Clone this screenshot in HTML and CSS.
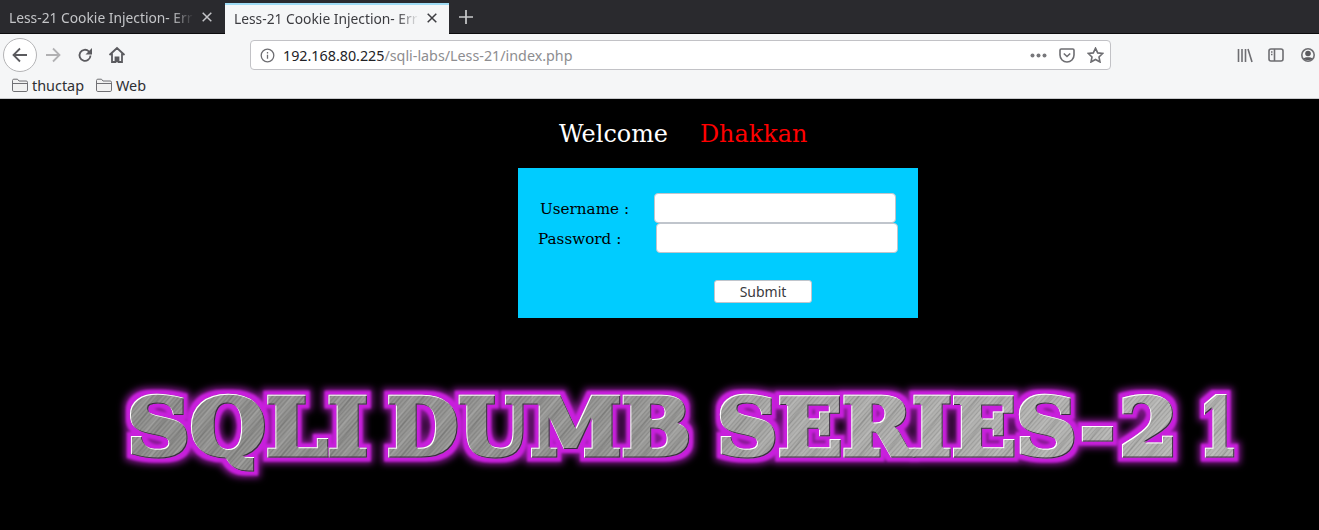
FILE: index.html
```html
<!DOCTYPE html>
<html lang="en">
<head>
<meta charset="utf-8">
<title>Less-21 Cookie Injection- Error Based</title>
<link rel="stylesheet" href="styles.css">
</head>
<body>
<header class="browser">
  <div class="tabbar">
    <div class="tab">
      <span class="tab-title">Less-21 Cookie Injection- Err</span>
      <svg class="tab-close" width="10" height="10" viewBox="0 0 10 10"><path d="M.7.7l8.600 8.600M9.300.7L.7 9.300"/></svg>
    </div>
    <div class="tab tab-active">
      <span class="tab-title">Less-21 Cookie Injection- Err</span>
      <svg class="tab-close" width="10" height="10" viewBox="0 0 10 10"><path d="M.7.7l8.600 8.600M9.300.7L.7 9.300"/></svg>
    </div>
    <svg class="new-tab" width="14" height="14" viewBox="0 0 14 14"><path d="M7 0v14M0 7h14"/></svg>
  </div>
  <div class="navbar">
    <div class="back">
      <svg width="18" height="18" viewBox="0 0 18 18" class="ico"><path d="M16 9H2.500M9 2.500L2.500 9 9 15.500"/></svg>
    </div>
    <svg width="18" height="18" viewBox="0 0 18 18" class="ico ico-off forward"><path d="M2 9h13.500M9 2.500L15.500 9 9 15.500"/></svg>
    <svg width="16" height="16" viewBox="0 0 16 16" class="ico reload"><path d="M13.500 8.500a5.500 5.500 0 1 1-1.700-4.200L14 6.500"/><path class="solid" d="M15 1v6.500H8.500z"/></svg>
    <svg width="18" height="18" viewBox="0 0 18 18" class="ico home"><path d="M1.500 9L9 2l7.500 7M4 7.500V16h3.500v-4.500h3V16H14V7.500"/><path class="solid" d="M7.500 11.500h3V16h-3z"/></svg>
    <div class="urlbar">
      <svg width="15" height="15" viewBox="0 0 15 15" class="info"><circle cx="7.500" cy="7.500" r="6.300"/><path d="M7.500 6.800v4M7.500 4v1.600"/></svg>
      <span class="url"><span class="host">192.168.80.225</span>/sqli-labs/Less-21/index.php</span>
      <span class="url-actions">
        <svg width="17" height="5" viewBox="0 0 17 5" class="dots"><circle cx="2.500" cy="2.500" r="2"/><circle cx="8.500" cy="2.500" r="2"/><circle cx="14.500" cy="2.500" r="2"/></svg>
        <svg width="16" height="15" viewBox="0 0 16 15" class="ico thin pocket"><path d="M1 2.200C1 1.500 1.500 1 2.200 1h11.600c.7 0 1.200.5 1.200 1.200V7a7 7 0 0 1-14 0z"/><path d="M4.800 5.500L8 8.500l3.200-3"/></svg>
        <svg width="17" height="16" viewBox="0 0 17 16" class="ico thin star"><path d="M8.500 1.200l2.200 4.700 5 .6-3.700 3.500 1 5-4.500-2.500L4 15l1-5L1.300 6.500l5-.6z"/></svg>
      </span>
    </div>
    <div class="side-icons">
      <svg width="16" height="15" viewBox="0 0 16 15" class="ico thin"><path d="M1.500 1v13M5 1v13M8.500 1v13M11 1l4 13"/></svg>
      <svg width="16" height="14" viewBox="0 0 16 14" class="ico thin"><rect x="1" y="1" width="14" height="12" rx="2"/><path d="M6.500 1v12M3 4h1.500M3 6.500h1.500"/></svg>
      <svg width="14" height="14" viewBox="0 0 14 14" class="ico thin user"><circle cx="7" cy="7" r="6.200"/><circle class="solid" cx="7" cy="5.500" r="2.800"/><path class="solid" d="M2.500 10.500C4 8.700 10 8.700 11.500 10.500 10 12.800 4 12.800 2.500 10.500z"/></svg>
    </div>
  </div>
  <div class="bookmarks">
    <span class="bookmark">
      <svg width="16" height="14" viewBox="0 0 16 14" class="folder"><path d="M.5 2.500c0-.8.500-1.300 1.300-1.300h3.700l1.500 1.800h7.200c.8 0 1.300.5 1.300 1.300v7.900c0 .8-.5 1.300-1.300 1.300H1.800c-.8 0-1.300-.5-1.300-1.300zM.5 5.500h15"/></svg>thuctap
    </span>
    <span class="bookmark">
      <svg width="16" height="14" viewBox="0 0 16 14" class="folder"><path d="M.5 2.500c0-.8.500-1.300 1.300-1.300h3.700l1.500 1.800h7.200c.8 0 1.300.5 1.300 1.300v7.900c0 .8-.5 1.300-1.300 1.300H1.800c-.8 0-1.300-.5-1.300-1.300zM.5 5.500h15"/></svg>Web
    </span>
  </div>
</header>
<main class="page">
  <p class="welcome"><span>Welcome</span><span class="name">Dhakkan</span></p>
  <form class="login">
    <div class="row row-user"><label class="lbl lbl-user">Username :</label><input class="field" type="text"></div>
    <div class="row row-pass"><label class="lbl lbl-pass">Password :</label><input class="field" type="password"></div>
    <div class="row-submit"><button class="submit" type="button">Submit</button></div>
  </form>
  <svg class="banner" width="1319" height="132" viewBox="0 0 1319 132">
    <defs>
      <linearGradient id="metal" gradientUnits="userSpaceOnUse" x1="120" y1="0" x2="1240" y2="0">
        <stop offset="0" stop-color="#8c8c8a"/>
        <stop offset=".45" stop-color="#929290"/>
        <stop offset=".6" stop-color="#aaaaa8"/>
        <stop offset="1" stop-color="#b4b4b2"/>
      </linearGradient>
      <pattern id="fine" patternUnits="userSpaceOnUse" width="9" height="3.300" patternTransform="rotate(-48)">
        <rect width="9" height=".9" fill="#5a5a5a" opacity=".2"/>
        <rect y="2" width="9" height=".6" fill="#ececec" opacity=".18"/>
      </pattern>
      <pattern id="wide" patternUnits="userSpaceOnUse" width="60" height="19" patternTransform="rotate(-52)">
        <rect width="60" height="3" fill="#ffffff" opacity=".1"/>
        <rect y="9" width="60" height="2" fill="#000000" opacity=".09"/>
      </pattern>
      <pattern id="steel" patternUnits="userSpaceOnUse" width="1319" height="132">
        <rect width="1319" height="132" fill="url(#metal)"/>
        <rect width="1319" height="132" fill="url(#fine)"/>
        <rect width="1319" height="132" fill="url(#wide)"/>
      </pattern>
      <filter id="glow" x="-5%" y="-40%" width="110%" height="180%" color-interpolation-filters="sRGB">
        <feMorphology in="SourceAlpha" operator="dilate" radius="6" result="fat"/>
        <feGaussianBlur in="fat" stdDeviation="3.500" result="fatblur"/>
        <feFlood flood-color="#8a1a96"/>
        <feComposite in2="fatblur" operator="in" result="halo"/>
        <feMorphology in="SourceAlpha" operator="dilate" radius="4" result="mid"/>
        <feGaussianBlur in="mid" stdDeviation="1" result="midblur"/>
        <feFlood flood-color="#c81fdc"/>
        <feComposite in2="midblur" operator="in" result="rim"/>
        <feOffset in="SourceAlpha" dx="1" dy="1" result="off"/>
        <feFlood flood-color="#ffffff"/>
        <feComposite in2="SourceAlpha" operator="in" result="w1"/>
        <feComposite in="w1" in2="off" operator="out" result="edge"/>
        <feOffset in="SourceAlpha" dx="-1" dy="-1" result="off2"/>
        <feFlood flood-color="#3a2a40"/>
        <feComposite in2="SourceAlpha" operator="in" result="d1"/>
        <feComposite in="d1" in2="off2" operator="out" result="edge2"/>
        <feMerge>
          <feMergeNode in="halo"/>
          <feMergeNode in="rim"/>
          <feMergeNode in="SourceGraphic"/>
          <feMergeNode in="edge2"/>
          <feMergeNode in="edge"/>
        </feMerge>
      </filter>
    </defs>
    <text class="banner-text" y="87" fill="url(#steel)" stroke="url(#steel)" filter="url(#glow)"><tspan x="127" textLength="241" lengthAdjust="spacingAndGlyphs">SQLI</tspan><tspan x="387" textLength="304" lengthAdjust="spacingAndGlyphs">DUMB</tspan><tspan x="717" textLength="398" lengthAdjust="spacingAndGlyphs">SERIES-</tspan><tspan x="1119" textLength="59" lengthAdjust="spacingAndGlyphs">2</tspan><tspan x="1199" textLength="39" lengthAdjust="spacingAndGlyphs">1</tspan></text>
  </svg>
</main>
</body>
</html>
```
FILE: styles.css
```css
* { box-sizing: border-box; }
html, body { margin: 0; height: 530px; overflow: hidden; background: #000; }
body { display: flex; flex-direction: column; font-family: "Noto Sans", sans-serif; }

.browser { height: 99px; background: #f5f6f7; flex: none; }
.tabbar { height: 34px; background: #2a2a2e; display: flex; align-items: stretch; padding-top: 3px; border-bottom: 1px solid #0c0c0d; }
.tab { width: 224px; display: flex; align-items: center; padding: 0 12px 2px 9px; color: #c4c5c8; font-size: 13.800px; }
.tab + .tab { margin-left: 1px; }
.tab-title { flex: 1; white-space: nowrap; overflow: hidden; -webkit-mask-image: linear-gradient(90deg, #000 88%, transparent 100%); mask-image: linear-gradient(90deg, #000 88%, transparent 100%); margin-right: 8px; }
.tab-close { flex: none; fill: none; stroke: currentColor; stroke-width: 1.500; }
.tab-active { background: #f5f6f7; color: #3c3c40; border-top: 2px solid #9fdcf5; margin-bottom: -1px; padding-bottom: 3px; }
.new-tab { align-self: center; margin: -2px 0 0 10px; fill: none; stroke: #c9cacc; stroke-width: 1.700; }

.navbar { height: 38px; display: flex; align-items: center; padding: 4px 0 0 3px; }
.back { width: 34px; height: 34px; border-radius: 50%; border: 1px solid #b4b4b6; background: #fff; display: flex; align-items: center; justify-content: center; flex: none; }
.ico { fill: none; stroke: #5b5b5f; stroke-width: 1.800; flex: none; }
.ico .solid { fill: #5b5b5f; stroke: none; }
.ico-off { stroke: #b1b1b3; }
.forward { margin-left: 7px; }
.reload { margin-left: 15px; }
.home { margin-left: 15px; }
.thin { stroke: #6e6e72; stroke-width: 1.600; }
.urlbar { width: 861px; height: 30px; margin-left: 124px; background: #fff; border: 1px solid #c2c2c6; border-radius: 4px; display: flex; align-items: center; padding: 0 6px 0 9px; flex: none; }
.info { fill: none; stroke: #6e6e72; stroke-width: 1.300; flex: none; }
.url { margin-left: 8px; font-size: 14.300px; color: #8d8d90; white-space: nowrap; }
.host { color: #222226; }
.url-actions { margin-left: auto; display: flex; align-items: center; gap: 12px; }
.dots { fill: #77777b; }
.side-icons { display: flex; align-items: center; gap: 15px; margin-left: 126px; }
.user { margin-left: 2px; }

.bookmarks { height: 27px; display: flex; align-items: center; gap: 12px; padding-left: 12px; border-bottom: 1px solid #c8c9cc; }
.bookmark { display: flex; align-items: center; gap: 4px; font-size: 14.400px; color: #2f2f33; }
.folder { fill: #f1f1f1; stroke: #707074; stroke-width: 1; flex: none; }

.page { flex: 1; background: #000; font-family: "DejaVu Serif", serif; min-height: 0; }
.welcome { margin: 21px 0 0 559px; height: 48px; font-size: 23.900px; line-height: 28px; color: #fff; display: flex; gap: 32px; }
.name { color: #f00; }
.login { width: 400px; height: 150px; margin-left: 518px; background: #0cf; display: flex; flex-direction: column; padding-top: 25px; color: #000; font-size: 15.200px; }
.row { display: flex; align-items: center; height: 30px; }
.lbl { display: block; padding-top: 2px; }
.row-user { padding-left: 22px; }
.row-pass { padding-left: 20px; }
.lbl-user { width: 114px; }
.lbl-pass { width: 118px; }
.field { width: 242px; height: 30px; border: 1px solid #c0c5cc; border-radius: 4px; background: #fff; padding: 0; }
.row-submit { padding: 27px 0 0 196px; }
.submit { display: block; width: 98px; height: 23px; padding: 0; background: #fff; border: 1px solid #c0c5cc; border-radius: 3px; font: 14px "Noto Sans", sans-serif; color: #3a3a3e; }
.banner { display: block; margin-top: 50px; }
.banner-text { font-family: "DejaVu Serif", serif; font-weight: 700; font-size: 78px; stroke-width: 5px; stroke-linejoin: miter; }
```
